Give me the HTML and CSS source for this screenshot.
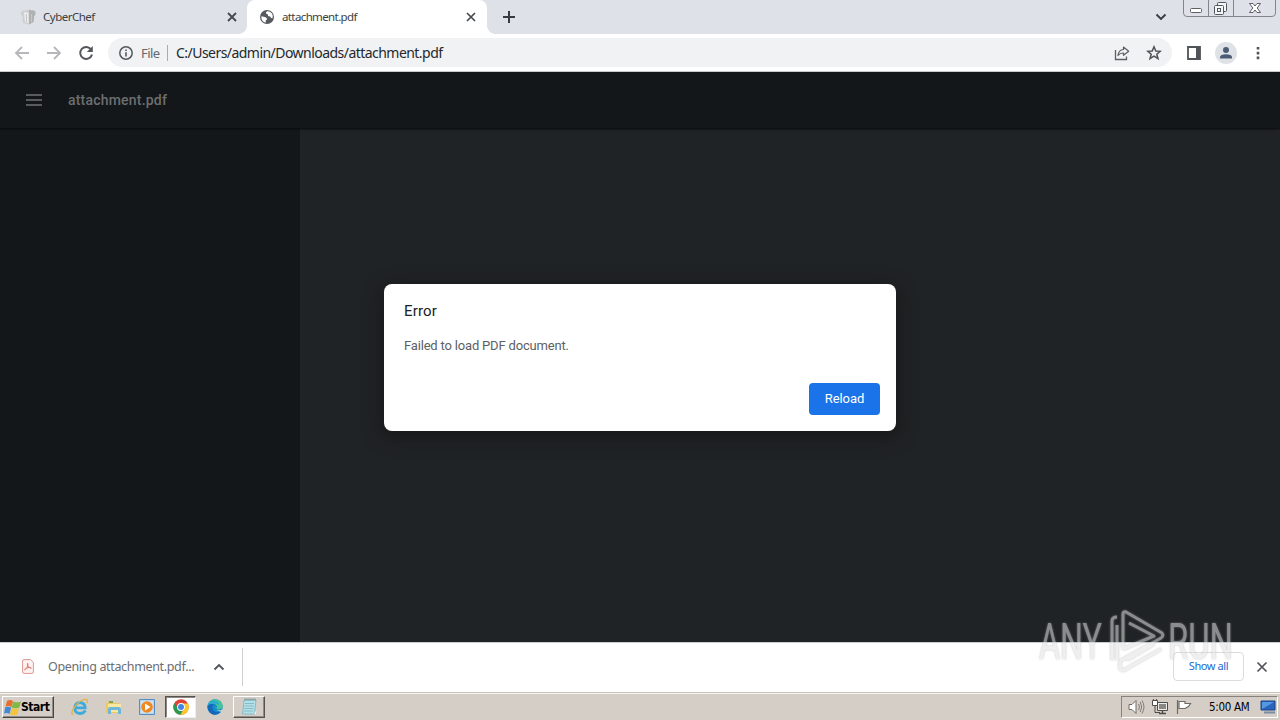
FILE: index.html
```html
<!DOCTYPE html>
<html lang="en">
<head>
<meta charset="utf-8">
<title>attachment.pdf</title>
<link rel="stylesheet" href="styles.css">
</head>
<body>
<div class="screen">
  <header class="tabs">
    <div class="tab tab-idle">
      <svg class="fav" width="16" height="16" viewBox="0 0 16 16"><path d="M3 14L2.500 7Q-.5 5 1.500 2.500Q3.500 .5 6 1.500Q9-.5 11 1.500Q15 .5 15.500 4Q15.500 6.500 14 7.500L13.500 13L9 15.500Z" fill="#cfcfd1"/><path d="M9 1Q10.500 .5 11 1.500Q15 .5 15.500 4Q15.500 6.500 14 7.500L13.500 13L9 15.500Z" fill="#b0b1b4"/><path d="M4 3L5 13L8.500 14V4Z" fill="#ededee"/><path d="M6.500 5V13M11.500 5V13" stroke="#c5c6c8"/></svg>
      <span class="tab-title cyber">CyberChef</span>
      <svg class="close" width="10" height="10" viewBox="0 0 10 10"><path d="M1 1L9 9M9 1L1 9" stroke="#45494d" stroke-width="1.800"/></svg>
    </div>
    <div class="tab tab-active">
      <svg class="fav" width="16" height="16" viewBox="0 0 16 16"><circle cx="8" cy="8" r="7" fill="#56595d"/><path d="M2.600 7.200L6.500 8.200Q8.300 9 8 10.500L6.700 11.600V13.700Q2.300 12.500 2.300 8ZM8.200 2.300Q6.300 3.200 7.200 4.800L9 5.500V7L11.200 7.500L12 9L13.500 9.300Q14.500 5 11.500 3.200Q10 2.200 8.200 2.300Z" fill="#fff"/></svg>
      <span class="tab-title attach">attachment.pdf</span>
      <svg class="close" width="10" height="10" viewBox="0 0 10 10"><path d="M1 1L9 9M9 1L1 9" stroke="#45494d" stroke-width="1.700"/></svg>
    </div>
    <svg class="plus" width="12" height="12" viewBox="0 0 12 12"><path d="M6 0V12M0 6H12" stroke="#383b40" stroke-width="2"/></svg>
    <svg class="chev" width="12" height="8" viewBox="0 0 12 8"><path d="M1.500 1.500L6 6L10.500 1.500" fill="none" stroke="#383b40" stroke-width="1.900"/></svg>
    <svg class="winbtns" width="94" height="18" viewBox="0 0 94 18"><path d="M.5 0V13Q.5 16.500 4 16.500H89Q92.500 16.500 92.500 13V0M25.500 0V16M50.500 0V16" fill="none" stroke="#81858c"/><rect x="7.500" y="8.500" width="11" height="4" rx="1" fill="#fff" stroke="#5c6066"/><g fill="#f5f6f8" stroke="#53575e"><rect x="34.500" y="2.500" width="9" height="9" rx="1"/><rect x="31.500" y="5.500" width="9" height="9" rx="1"/><rect x="34.500" y="8.500" width="3" height="3"/></g><path d="M66.500 3.500H70L72 6L74 3.500H77.500L74.200 8L77.500 12.500H74L72 10L70 12.500H66.500L69.800 8Z" fill="#fff" stroke="#5c6066"/></svg>
  </header>

  <div class="toolbar">
    <svg class="nav back" width="16" height="16" viewBox="0 0 16 16"><path d="M15 8H2M8 2L2 8L8 14" fill="none" stroke="#b5b7ba" stroke-width="1.800"/></svg>
    <svg class="nav fwd" width="16" height="16" viewBox="0 0 16 16"><path d="M1 8H14M8 2L14 8L8 14" fill="none" stroke="#b5b7ba" stroke-width="1.800"/></svg>
    <svg class="nav" width="16" height="16" viewBox="0 0 16 16"><path d="M13.200 4.600A6 6 0 1 0 14 9.500" fill="none" stroke="#54575b" stroke-width="2"/><path d="M14.800 1V7H8.800Z" fill="#54575b"/></svg>
    <div class="omnibox">
      <svg width="14" height="14" viewBox="0 0 14 14"><circle cx="7" cy="7" r="6.200" fill="none" stroke="#55585c" stroke-width="1.500"/><path d="M7 6.200V10.600M7 3.400V5" stroke="#55585c" stroke-width="1.600"/></svg>
      <span class="scheme">File</span>
      <span class="bar"></span>
      <span class="url">C:/Users/admin/Downloads/attachment.pdf</span>
      <svg class="share" width="16" height="16" viewBox="0 0 16 16"><path d="M1.500 5V14.500H12.500V11.500" fill="none" stroke="#5c5f63" stroke-width="1.300"/><path d="M9.500 2L14.700 6.200L9.500 10.300V8Q6 7.800 4 10.500Q4.500 5 9.500 4.500Z" fill="none" stroke="#5c5f63" stroke-width="1.200" stroke-linejoin="round"/></svg>
      <svg class="star" width="16" height="16" viewBox="0 0 16 16"><path d="M8 1.800L9.800 6L14.300 6.300L10.800 9.200L12 13.700L8 11.200L4 13.700L5.200 9.200L1.700 6.300L6.200 6Z" fill="none" stroke="#4f5256" stroke-width="1.500"/></svg>
    </div>
    <svg class="panel" width="14" height="14" viewBox="0 0 14 14"><path d="M1 1H13V13H1Z" fill="none" stroke="#505357" stroke-width="1.800"/><path d="M9 1H13V13H9Z" fill="#505357"/></svg>
    <svg class="avatar" width="22" height="22" viewBox="0 0 22 22"><circle cx="11" cy="11" r="11" fill="#dee1e6"/><circle cx="11" cy="8" r="3" fill="#4c5a76"/><path d="M5 16.500V15Q5.500 12.200 11 12.200Q16.500 12.200 17 15V16.500Z" fill="#4c5a76"/></svg>
    <svg class="dots" width="4" height="14" viewBox="0 0 4 14"><path d="M.7 1H3.300V3.600H.7ZM.7 5.800H3.300V8.400H.7ZM.7 10.600H3.300V13.200H.7Z" fill="#505357"/></svg>
  </div>

  <main class="viewer">
    <div class="pdfbar">
      <svg width="16" height="12" viewBox="0 0 16 12"><path d="M0 1H16M0 6H16M0 11H16" stroke="#6f7173" stroke-width="1.700"/></svg>
      <span class="pdfname">attachment.pdf</span>
    </div>
    <div class="content">
      <aside class="side"></aside>
      <section class="page">
        <div class="dialog">
          <h1 class="title">Error</h1>
          <p class="msg"><span>Failed to load PDF document.</span></p>
          <button class="reload"><span>Reload</span></button>
        </div>
      </section>
    </div>
  </main>

  <div class="downloads">
    <svg class="pdficon" width="12" height="15" viewBox="0 0 12 15"><path d="M2 .6H8.500L11.400 3.500V13Q11.400 14.400 10 14.400H2Q.6 14.400 .6 13V2Q.6 .6 2 .6Z" fill="#fff3f2" stroke="#e39691"/><path d="M2.500 11Q6 8.500 6 5Q5.800 3.500 5.200 5Q5.500 8.500 9.300 9.300Q10 8.500 7 8.400Q4 8.800 2.500 11Z" fill="none" stroke="#e07b75"/></svg>
    <span class="dlname">Opening attachment.pdf...</span>
    <svg class="up" width="12" height="8" viewBox="0 0 12 8"><path d="M1.500 6.500L6 2L10.500 6.500" fill="none" stroke="#505357" stroke-width="1.800"/></svg>
    <span class="dlsep"></span>
    <button class="showall"><span>Show all</span></button>
    <svg class="dlclose" width="12" height="12" viewBox="0 0 12 12"><path d="M1.500 1.500L10.500 10.500M10.500 1.500L1.500 10.500" stroke="#505357" stroke-width="1.700"/></svg>
  </div>

  <footer class="taskbar">
    <div class="start">
      <svg width="18" height="17" viewBox="0 0 18 17"><path d="M3 2Q6 0 9 2L7.500 8Q5 6.400 1.500 7.700Z" fill="#e8702c"/><path d="M9.300 2.500Q13 4.200 17 2.500L15.300 8.600Q12 10 7.800 8.400Z" fill="#7fb842"/><path d="M1.300 8.200Q4.500 7 7.200 8.600L5.500 15Q3 13.500 0 14.500Z" fill="#418bd4"/><path d="M7.700 9Q11.500 10.600 15 9.300L13.400 15.500Q9.800 17 6 15.400Z" fill="#f3c43c"/></svg>
      <span>Start</span>
    </div>
    <svg class="task ie" width="18" height="18" viewBox="0 0 18 18"><path d="M14.500 12.500Q12.500 15.500 9 15.500Q3.700 15 3.700 10Q4.200 4.500 9.200 4.500Q14 5 14.200 9.800H5" fill="none" stroke="#3eabdf" stroke-width="2.800"/><path d="M2.500 15.500Q-.5 17.500 1.500 12.500Q5 4.500 13 1.500Q18 .5 15.700 5.200" fill="none" stroke="#e4b442" stroke-width="1.300"/></svg>
    <svg class="task folder" width="18" height="18" viewBox="0 0 18 18"><path d="M1 5H3V3H8L9 5H15V15H1Z" fill="#eac866"/><path d="M3 6H16V14H3Z" fill="#f8e7a0"/><path d="M3 16V11Q3 9 5 9H14Q16 9 16 11V16H13V12H6V16Z" fill="#6fb7d8"/><path d="M4 4H8" stroke="#77a863" stroke-width="2"/></svg>
    <svg class="task media" width="16" height="16" viewBox="0 0 16 16"><path d="M.5 .5H15.500V15.500H.5Z" fill="#b5d5ee" stroke="#568dc2"/><path d="M2 2H14V14H2Z" fill="#cfe3f2"/><circle cx="8" cy="8" r="5.800" fill="#ef8820"/><path d="M6 4.500L11.500 8L6 11.500Z" fill="#fff"/></svg>
    <div class="taskbox current">
      <svg width="16" height="16" viewBox="0 0 16 16"><circle cx="8" cy="8" r="7.700" fill="#db4437"/><path d="M1.300 4.200A7.700 7.700 0 0 0 7.300 15.700L10.900 9.800L8 8L5 9.500Z" fill="#289b51"/><path d="M7.300 15.700A7.700 7.700 0 0 0 15 4.500H8L11.200 9.700Z" fill="#f9c72e"/><circle cx="8" cy="8" r="3.900" fill="#fff"/><circle cx="8" cy="8" r="3" fill="#4285e9"/></svg>
    </div>
    <svg class="task edge" width="16" height="16" viewBox="0 0 16 16"><circle cx="8" cy="8" r="7.700" fill="#1389cf"/><path d="M.5 7Q2 .2 8.500 .3Q15.500 1 15.700 7Q15.500 10.500 11 10.500Q8.500 10.200 10 8Q9.500 4.500 5.500 4.500Q2 4.500 .5 7Z" fill="#43c497"/><path d="M.5 7Q2 1.500 7 1.500Q12 2 12 6Q10 4 7 4.500Q3 4.500 .5 7Z" fill="#2aa9d6"/><path d="M.5 7Q3 4 7 5.500Q4 8 6 11Q8.500 14.500 14 12.500Q9 18 4 14.500Q.5 12 .5 7Z" fill="#1468b6"/><path d="M8.500 7.500Q7.500 9.500 9 10.700Q11.500 12.300 15 10.500L16 13Q13 12.500 10.500 11.700Q7 10 8.500 7.500Z" fill="#d5d0c9"/></svg>
    <div class="taskbox note">
      <svg width="18" height="18" viewBox="0 0 18 18"><path d="M4 2H16L14.500 16H2.500Z" fill="#b5e0e8" stroke="#86bac5"/><path d="M5 5.500H14M4.500 8H13.700M4.300 10.500H13.500M4 13H13" stroke="#82bcc8"/><path d="M4.500 1.500H16" stroke="#718990" stroke-width="2" stroke-dasharray="1 1"/><path d="M14 16L16.500 12L16 16Z" fill="#e7f7f9"/></svg>
    </div>
    <div class="tray">
      <svg width="18" height="16" viewBox="0 0 18 16"><path d="M1 5.500H4L8 1.500V14.500L4 10.500H1Z" fill="#fff" stroke="#6e6b67"/><path d="M10.500 5Q12.500 8 10.500 11M12.300 3Q15 8 12.300 13M14 1.500Q18 8 14 14.500" fill="none" stroke="#807c76"/></svg>
      <svg class="net" width="16" height="16" viewBox="0 0 16 16"><path d="M5.500 3.500H15.500V11.500H5.500Z" fill="#eee" stroke="#4e4c49"/><path d="M7 5H14V10H7Z" fill="#8a8782"/><path d="M7 14.500H14M10.500 12V14" stroke="#4e4c49" stroke-width="1.500"/><path d="M3 7V13.500H8" fill="none" stroke="#4e4c49"/><path d="M.5 1.500H5.500V6.500H.5ZM1.500 0V2M4.500 0V2" fill="#fff" stroke="#4e4c49"/></svg>
      <svg class="flag" width="16" height="16" viewBox="0 0 16 16"><path d="M1.500 1V15M3 2.500H9V4.500H14.500L12.500 7.500L9 9.500H3Z" fill="#fff" stroke="#6e6b67" stroke-width="1.200"/></svg>
      <span class="clock">5:00 AM</span>
      <svg class="desk" width="16" height="14" viewBox="0 0 16 14"><path d="M1 1H15V10H1Z" fill="#2a65bd" stroke="#1a4388"/><path d="M2 2H14L2 9Z" fill="#5599e5"/><path d="M4 12.500H15" stroke="#7b8ca3" stroke-width="2"/></svg>
    </div>
  </footer>

  <svg class="watermark" width="202" height="68" viewBox="0 0 202 68">
    <text x="3" y="51" textLength="63" lengthAdjust="spacingAndGlyphs">ANY</text>
    <text x="132" y="51" textLength="65" lengthAdjust="spacingAndGlyphs">RUN</text>
    <path d="M76 52V13Q76 9 81 9M81 52V17M87 41V6Q87 3 90 4L126 25Q128 28 125 30L84 53M87 41L118 28L93 15M84 53V60Q86 64 90 61L125 41M91 52L118 36" class="mark"/>
  </svg>
</div>
</body>
</html>
```
FILE: styles.css
```css
* { box-sizing: border-box; }
body { margin: 0; overflow: hidden; font-family: "Noto Sans", "Open Sans", sans-serif; }
svg { display: block; flex: none; }
span { white-space: nowrap; }
button { font-family: inherit; padding: 0; }
.screen { position: relative; width: 1280px; height: 720px; display: flex; flex-direction: column; overflow: hidden; }

.tabs { height: 34px; flex: none; display: flex; background: #dee1e8; }
.tab { height: 34px; display: flex; align-items: center; }
.tab-idle { width: 247px; padding: 0 10px 0 20px; border-bottom-right-radius: 8px; }
.tab-active { width: 240px; padding: 0 11px 0 12px; background: #fff; border-radius: 8px 8px 0 0; position: relative; }
.tab-active::before, .tab-active::after { content: ""; position: absolute; bottom: 0; width: 8px; height: 8px; }
.tab-active::before { left: -8px; background: radial-gradient(circle at 0 0, #dee1e8 7.5px, #fff 8px); }
.tab-active::after { right: -8px; background: radial-gradient(circle at 100% 0, #dee1e8 7.5px, #fff 8px); }
.tab-title { font-size: 11.5px; line-height: 16px; margin-left: 7px; color: #3c3f43; flex: 1; }
.cyber { letter-spacing: -.5px; }
.attach { letter-spacing: -.62px; }
.plus { margin: 11px 0 0 16px; }
.chev { margin: 13px 0 0 auto; }
.winbtns { margin-left: 16px; margin-right: 3px; }

.toolbar { height: 38px; flex: none; display: flex; align-items: center; background: #fff; border-bottom: 1px solid #d8dadd; padding: 0 19px 0 14px; }
.nav { margin-right: 16px; }
.nav + .omnibox { margin-left: -2px; }
.omnibox { width: 1064px; height: 29px; border-radius: 15px; background: #f0f2f4; display: flex; align-items: center; padding: 0 10px 0 11px; }
.scheme { width: 20px; margin-left: 8px; font-size: 13px; letter-spacing: -.6px; color: #65686c; }
.bar { width: 1px; height: 16px; margin-left: 6px; background: #a8abaf; }
.url { margin-left: 8px; font-size: 14px; letter-spacing: -.54px; color: #25282c; }
.share { margin-left: auto; }
.star { margin-left: 16px; }
.panel { margin-left: 15px; }
.avatar { margin-left: 14px; }
.dots { margin-left: 19px; }

.viewer { height: 570px; flex: none; display: flex; flex-direction: column; background: #202325; }
.pdfbar { height: 56px; flex: none; display: flex; align-items: center; padding-left: 26px; background: #141719; position: relative; box-shadow: 0 1px 2px #07090b; }
.pdfname { margin-left: 26px; font: 500 14px Roboto, sans-serif; color: #6c6e70; letter-spacing: .2px; }
.content { flex: 1; display: flex; }
.side { width: 300px; background: #141719; }
.page { flex: 1; padding: 156px 0 0 84px; background: #202325; }
.dialog { width: 512px; height: 147px; border-radius: 8px; padding: 17px 16px 16px 20px; background: #fff; box-shadow: 0 4px 16px 4px #191a1a; display: flex; flex-direction: column; font-family: Roboto, sans-serif; }
.title { margin: 0; font-size: 15px; line-height: 20px; font-weight: 400; color: #202124; letter-spacing: .15px; }
.msg { margin: 15px 0 0; font-size: 13px; line-height: 20px; color: #5c5f63; letter-spacing: -.18px; }
.reload { width: 71px; height: 32px; align-self: flex-end; margin-top: auto; border: 0; border-radius: 4px; background: #1a73e8; color: #fff; font-size: 13px; padding-bottom: 2px; letter-spacing: -.1px; }

.downloads { height: 51px; flex: none; display: flex; align-items: center; padding: 0 12px 3px 22px; background: #fff; border-top: 1px solid #cbcdd0; }
.dlname { width: 147px; margin-left: 14px; font-size: 12.5px; letter-spacing: -.34px; color: #6b6e72; }
.up { margin-left: 18px; }
.dlsep { width: 1px; height: 38px; margin-left: 17px; background: #cdcfd2; }
.showall { width: 71px; height: 29px; margin-left: auto; border: 1px solid #dadce0; border-radius: 4px; background: #fff; color: #216bd0; font-size: 11px; line-height: 14px; letter-spacing: -.4px; padding-bottom: 1px; }
.dlclose { margin-left: 12px; }

.taskbar { height: 27px; flex: none; display: flex; align-items: center; background: #d5cec6; border-top: 1px solid #f8f6f2; box-shadow: 0 -1px #c7c4bf; padding: 0 2px; position: relative; }
.start { width: 52px; height: 22px; display: flex; align-items: center; border: 1px solid #fff; border-right-color: #494744; border-bottom-color: #494744; box-shadow: inset -1px -1px #918b83; font: bold 12px "DejaVu Sans Condensed", "DejaVu Sans", sans-serif; letter-spacing: -.45px; padding-left: 1px; }
.start span { margin-left: -1px; }
.ie { margin-left: 17px; }
.folder { margin-left: 16px; }
.media { margin-left: 16px; }
.taskbox { height: 22px; display: flex; align-items: center; justify-content: center; border: 1px solid #56534f; }
.current { width: 31px; margin-left: 10px; background: #fff; border-right-color: #eee; border-bottom-color: #eee; box-shadow: inset 1px 1px #8c8780; }
.edge { margin-left: 11px; }
.note { width: 32px; margin-left: 10px; border-top-color: #fff; border-left-color: #fff; box-shadow: inset -1px -1px #918b83; }
.tray { width: 157px; height: 22px; margin-left: auto; display: flex; align-items: center; border: 1px solid #87827b; border-bottom-color: #fff; border-right-color: #fff; padding-left: 6px; }
.net { margin-left: 6px; }
.flag { margin-left: 8px; }
.clock { width: 41px; margin-left: 17px; font: 11.5px "DejaVu Sans Condensed", "DejaVu Sans", sans-serif; letter-spacing: -.3px; }
.desk { margin-left: 10px; }

.watermark { position: absolute; left: 1036px; top: 608px; opacity: .55; filter: drop-shadow(0 0 1px #999); pointer-events: none; }
.watermark text { font: 50px/50px Roboto, sans-serif; fill: #e2e3e4; }
.mark { fill: none; stroke: #e2e3e4; stroke-width: 3; stroke-linejoin: round; }
```
